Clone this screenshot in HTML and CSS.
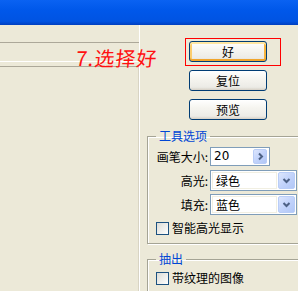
FILE: index.html
```html
<!DOCTYPE html>
<html lang="zh">
<head>
<meta charset="utf-8">
<link rel="stylesheet" href="styles.css">
</head>
<body>
<div class="titlebar"></div>
<div class="main">
  <div class="canvas">
    <div class="frame1"></div>
    <div class="frame2"></div>
    <div class="note">7.选择好</div>
  </div>
  <div class="panel">
    <div class="highlight"><button class="btn btn-default">好</button></div>
    <button class="btn btn-gap1">复位</button>
    <button class="btn btn-gap2">预览</button>
    <fieldset class="group group-tools">
      <legend>工具选项</legend>
      <div class="row row-num">
        <span class="lbl">画笔大小:</span>
        <div class="field field-num">
          <span class="val val-num">20</span>
          <span class="arrow arrow-num"><svg width="9" height="9" viewBox="0 0 9 9"><path d="M3 1.5 L6 4.5 L3 7.5" fill="none" stroke="#4d6185" stroke-width="2"/></svg></span>
        </div>
      </div>
      <div class="row row-sel">
        <span class="lbl">高光:</span>
        <div class="field field-sel">
          <span class="val">绿色</span>
          <span class="arrow arrow-sel"><svg width="9" height="9" viewBox="0 0 9 9"><path d="M1.5 3 L4.5 6 L7.5 3" fill="none" stroke="#4d6185" stroke-width="2"/></svg></span>
        </div>
      </div>
      <div class="row row-sel row-sel2">
        <span class="lbl">填充:</span>
        <div class="field field-sel">
          <span class="val">蓝色</span>
          <span class="arrow arrow-sel"><svg width="9" height="9" viewBox="0 0 9 9"><path d="M1.5 3 L4.5 6 L7.5 3" fill="none" stroke="#4d6185" stroke-width="2"/></svg></span>
        </div>
      </div>
      <div class="check check-first"><span class="box"></span><span class="ctext">智能高光显示</span></div>
    </fieldset>
    <fieldset class="group group-extract">
      <legend>抽出</legend>
      <div class="check"><span class="box"></span><span class="ctext">带纹理的图像</span></div>
    </fieldset>
  </div>
</div>
</body>
</html>
```
FILE: styles.css
```css
* { box-sizing: border-box; }
html, body {
  margin: 0;
  padding: 0;
}
body {
  width: 298px;
  height: 291px;
  overflow: hidden;
  background: #ece9d8;
  font-family: "Noto Sans CJK SC", sans-serif;
  font-size: 12px;
  color: #000;
}
.titlebar {
  height: 25px;
  background: linear-gradient(#0a62f2 0%, #0058ea 40%, #0053e2 85%, #003fbf 100%);
}
.main {
  display: flex;
  height: 266px;
}
.canvas {
  position: relative;
  width: 140px;
  flex: none;
  border-right: 1px solid #ffffff;
  padding-top: 17px;
}
.frame1 {
  height: 20px;
  border-top: 1px solid #aca899;
  border-bottom: 1px solid #ffffff;
}
.frame2 {
  margin-top: 4px;
  height: 230px;
  border-top: 1px solid #aca899;
  border-right: 1px solid #d8d4c4;
}
.note {
  position: absolute;
  left: 76px;
  top: 21px;
  z-index: 2;
  color: #ff1010;
  font-size: 20px;
  line-height: 24px;
  letter-spacing: 1px;
  white-space: nowrap;
  transform: skewX(-6deg);
}
.panel {
  flex: none;
  width: 158px;
  padding-left: 7px;
  padding-top: 13px;
  overflow: hidden;
}
.highlight {
  width: 96px;
  height: 28px;
  margin-left: 38px;
  border: 1px solid #ff0000;
  padding: 2px 0 0 3px;
}
.btn {
  display: block;
  width: 78px;
  height: 21px;
  padding: 0;
  border: 1px solid #003c74;
  border-radius: 3px;
  background: linear-gradient(#ffffff 0%, #f6f5f0 40%, #ecebe6 85%, #d6d0c5 100%);
  font-family: "Noto Sans CJK SC", sans-serif;
  font-size: 12px;
  line-height: 19px;
  color: #000;
  text-align: center;
}
.btn-default {
  box-shadow: inset 0 2px 0 #ffe7a2, inset 0 -2px 0 #f1a52b, inset 2px 0 0 #fbcd6e, inset -2px 0 0 #f6b540;
}
.btn-gap1 { margin: 4px 0 0 42px; }
.btn-gap2 { margin: 8px 0 0 42px; }

.group {
  width: 200px;
  min-width: 0;
  margin: 9px 0 0 0;
  padding: 4px 0 8px 8px;
  border: 1px solid #a5a495;
  box-shadow: inset 1px 1px 0 #ffffff, 1px 1px 0 #ffffff;
}
.group legend {
  padding: 0 3px;
  color: #0046d5;
  font-size: 12px;
  line-height: 14px;
}
.group-extract {
  margin-top: 8px;
  padding-top: 5px;
  height: 60px;
}
.row {
  display: flex;
  align-items: center;
}
.lbl {
  width: 54px;
  flex: none;
  padding-right: 2px;
  text-align: right;
  line-height: 14px;
  white-space: nowrap;
}
.field {
  display: flex;
  align-items: center;
  background: #fff;
  border: 1px solid #7f9db9;
}
.field-num {
  width: 60px;
  height: 19px;
  padding: 0 2px 0 2px;
}
.row-sel { margin-top: 4px; }
.row-sel2 { margin-top: 3px; }
.field-sel {
  width: 87px;
  height: 21px;
  padding: 1px;
}
.val {
  flex: 1;
  height: 100%;
  padding-left: 3px;
  line-height: 17px;
}
.field-sel .val {
  border: 1px solid #f1efe2;
  line-height: 16px;
}
.val-num {
  font-family: "DejaVu Sans", sans-serif;
  font-size: 12px;
  padding-left: 1px;
}
.arrow {
  display: flex;
  align-items: center;
  justify-content: center;
  background: linear-gradient(135deg, #dce6fd 0%, #c2d3fb 50%, #b1c7f6 100%);
  border: 1px solid #b9cdf7;
  border-radius: 2px;
}
.arrow-num {
  width: 14px;
  height: 15px;
}
.arrow-sel {
  width: 17px;
  height: 17px;
  margin-left: 1px;
}
.check {
  display: flex;
  align-items: center;
  height: 14px;
}
.check-first { margin-top: 6px; }
.box {
  width: 13px;
  height: 13px;
  flex: none;
  border: 1px solid #1c5180;
  background: linear-gradient(135deg, #dcdcd7 0%, #f4f4f2 70%, #ffffff 100%);
}
.ctext {
  margin-left: 3px;
  line-height: 14px;
  white-space: nowrap;
}
```
